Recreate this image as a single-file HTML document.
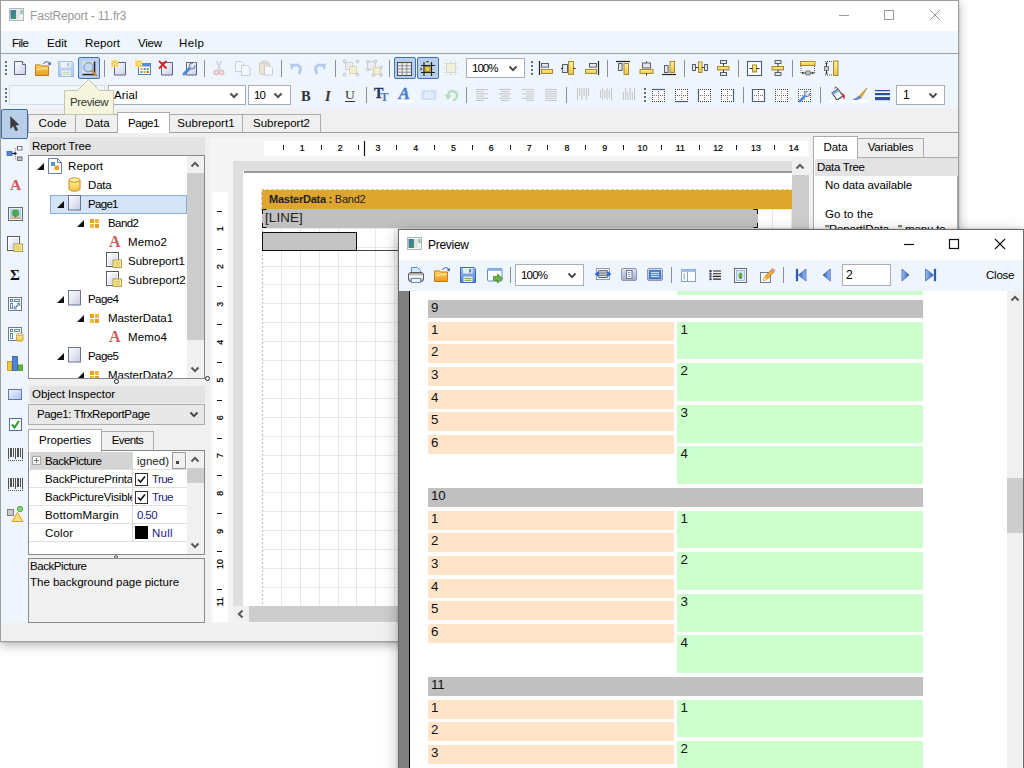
<!DOCTYPE html>
<html><head><meta charset="utf-8"><title>FastReport</title><style>
*{box-sizing:border-box;margin:0;padding:0}
html,body{width:1024px;height:768px;overflow:hidden;background:#fff}
body{font-family:"Liberation Sans",sans-serif;font-size:12px;color:#000;position:relative}
.a{position:absolute}
.t{position:absolute;white-space:nowrap;line-height:14px;font-size:12px;letter-spacing:-0.25px}
#main{position:absolute;left:0;top:0;width:959px;height:642px;background:#F0F0F0;border:1px solid #9E9E9E;box-shadow:0 3px 10px rgba(0,0,0,.30),0 0 2px rgba(0,0,0,.2);overflow:hidden}
#main>.in{position:absolute;left:-1px;top:-1px;width:959px;height:642px}
#prev{position:absolute;left:398px;top:229px;width:626px;height:560px;background:#fff;border:1px solid #6A6A6A;box-shadow:0 4px 15px rgba(0,0,0,.28),0 0 3px rgba(0,0,0,.2);overflow:hidden}
#prev>.in{position:absolute;left:-399px;top:-230px;width:1024px;height:768px}
.sep{position:absolute;width:1px;background:#8D8D8D}
.cb{position:absolute;background:#fff;border:1px solid #ABADB3;height:19px}
.tab{position:absolute;border:1px solid #ACACAC;background:#F0F0F0;text-align:center;font-size:12px;line-height:14px;letter-spacing:-0.25px}
svg{position:absolute;overflow:visible}
</style></head><body>
<svg width="0" height="0" style="position:absolute"><defs>
<linearGradient id="gpg" x1="0" y1="0" x2="1" y2="1"><stop offset="0" stop-color="#fff"/><stop offset="1" stop-color="#C9CEE6"/></linearGradient>
<linearGradient id="gy" x1="0" y1="0" x2="0" y2="1"><stop offset="0" stop-color="#FFF0A0"/><stop offset="1" stop-color="#EFC448"/></linearGradient>
<linearGradient id="gfold" x1="0" y1="0" x2="0" y2="1"><stop offset="0" stop-color="#FFD56A"/><stop offset="1" stop-color="#E59A1C"/></linearGradient>
<linearGradient id="gbl" x1="0" y1="0" x2="0" y2="1"><stop offset="0" stop-color="#9DC0F2"/><stop offset="1" stop-color="#4C7ED2"/></linearGradient>
<linearGradient id="gbl2" x1="0" y1="0" x2="1" y2="0"><stop offset="0" stop-color="#9CC0F2"/><stop offset="1" stop-color="#2C5DB8"/></linearGradient>
<linearGradient id="gbl3" x1="0" y1="0" x2="1" y2="0"><stop offset="0" stop-color="#2C5DB8"/><stop offset="1" stop-color="#9CC0F2"/></linearGradient>
<linearGradient id="gapp" x1="0" y1="0" x2="1" y2="1"><stop offset="0" stop-color="#3F6FB0"/><stop offset="1" stop-color="#3FA060"/></linearGradient>
<linearGradient id="gprn" x1="0" y1="0" x2="0" y2="1"><stop offset="0" stop-color="#8A8A8A"/><stop offset=".45" stop-color="#FAFAFA"/><stop offset="1" stop-color="#9A9A9A"/></linearGradient>
<linearGradient id="grc" x1="0" y1="0" x2="1" y2="1"><stop offset="0" stop-color="#F4F8FF"/><stop offset="1" stop-color="#A8C0EC"/></linearGradient>
<linearGradient id="gsl" x1="0" y1="0" x2="0" y2="1"><stop offset="0" stop-color="#DCE2F0"/><stop offset="1" stop-color="#9EAECE"/></linearGradient>
<linearGradient id="ggr" x1="0" y1="0" x2="0" y2="1"><stop offset="0" stop-color="#f4f4f4"/><stop offset="1" stop-color="#B5B5B5"/></linearGradient>
</defs></svg>
<div id="main"><div class="in">
<div class="a" style="left:1px;top:1px;width:957px;height:30px;background:#fff;"></div>
<svg style="left:9px;top:8px" width="15" height="13" viewBox="0 0 15 13"><rect x="0.5" y="0.5" width="14" height="12" fill="#F4F4F4" stroke="#AEB6BE"/><rect x="1.5" y="2" width="5.5" height="9" fill="url(#gapp)"/><rect x="7" y="2" width="4" height="9" fill="#E4E4E4"/><rect x="11.5" y="2" width="2" height="4" fill="#7CB8A0"/></svg>
<div class="t" style="left:30px;top:9px;font-size:12px;letter-spacing:-0.182px;color:#999;">FastReport - 11.fr3</div>
<svg style="left:839px;top:9px" width="110" height="14" viewBox="0 0 110 14"><path d="M0 6.5 H10" stroke="#999" stroke-width="1"/><rect x="45.5" y="1.5" width="9" height="9" fill="none" stroke="#999"/><path d="M91 1 L101 11 M101 1 L91 11" stroke="#999" stroke-width="1"/></svg>
<div class="a" style="left:1px;top:31px;width:957px;height:22px;background:#EEF5FD;"></div>
<div class="t" style="left:12px;top:36px;font-size:11.5px;letter-spacing:-0.516px;">File</div>
<div class="t" style="left:47px;top:36px;font-size:11.5px;letter-spacing:0.062px;">Edit</div>
<div class="t" style="left:85px;top:36px;font-size:11.5px;letter-spacing:0.1px;">Report</div>
<div class="t" style="left:138px;top:36px;font-size:11.5px;letter-spacing:-0.245px;">View</div>
<div class="t" style="left:179px;top:36px;font-size:11.5px;letter-spacing:0.448px;">Help</div>
<div class="a" style="left:1px;top:53px;width:957px;height:1px;background:#A0A0A0;"></div>
<div class="a" style="left:1px;top:54px;width:957px;height:55px;background:#EEF5FD;"></div>
<div class="a" style="left:5px;top:61px;width:2px;height:2px;background:#6E6E6E;"></div><div class="a" style="left:5px;top:65px;width:2px;height:2px;background:#6E6E6E;"></div><div class="a" style="left:5px;top:69px;width:2px;height:2px;background:#6E6E6E;"></div><div class="a" style="left:5px;top:73px;width:2px;height:2px;background:#6E6E6E;"></div>
<div class="a" style="left:5px;top:88px;width:2px;height:2px;background:#6E6E6E;"></div><div class="a" style="left:5px;top:92px;width:2px;height:2px;background:#6E6E6E;"></div><div class="a" style="left:5px;top:96px;width:2px;height:2px;background:#6E6E6E;"></div><div class="a" style="left:5px;top:100px;width:2px;height:2px;background:#6E6E6E;"></div>
<svg style="left:12px;top:60px" width="16" height="16" viewBox="0 0 16 16"><g opacity="1"><path d="M2.5 1.5 H10.5 L13.5 4.5 V14.5 H2.5 Z" fill="url(#gpg)" stroke="#5A6483" stroke-width="1"/><path d="M10.5 1.5 V4.5 H13.5" fill="#fff" stroke="#5A6483" stroke-width="1"/></g></svg>
<svg style="left:35px;top:60px" width="16" height="16" viewBox="0 0 16 16"><path d="M0.5 6 V4.9 H5.5 L6.5 6 H13.5 V15.5 H0.5 Z" fill="url(#gfold)" stroke="#C87A18"/><path d="M1.5 9.5 H5.5 L6.5 8.5 H12.5" fill="none" stroke="#FFE9A8" stroke-width="1"/><path d="M8.5 4 C9.5 1 13.5 1 14.6 3.3" fill="none" stroke="#34558F" stroke-width="1"/><path d="M16 2 L15.4 5.6 L12.6 4 Z" fill="#34558F"/></svg>
<svg style="left:58px;top:60px" width="16" height="16" viewBox="0 0 16 16"><g opacity="0.4"><path d="M0.5 1.5 H14 L15.5 3 V16.5 H0.5 Z" fill="url(#gbl)" stroke="#3A68BC"/><rect x="3" y="2" width="9.5" height="5.5" fill="#E9EEF8"/><rect x="9.3" y="3" width="1.8" height="3.5" fill="#3E6FC4"/><rect x="3.5" y="10.5" width="9" height="5.5" fill="#F2F7EC"/><path d="M4.5 12.3 H11.5 M4.5 14.4 H11.5" stroke="#7DB84E" stroke-width="1.3"/></g></svg>
<div class="a" style="left:78px;top:57px;width:22px;height:22px;background:#B9CFEB;border:1px solid #3F73B7;border-radius:2px"></div>
<svg style="left:81px;top:60px" width="16" height="16" viewBox="0 0 16 16"><path d="M1.5 1.5 H13.5 V14.5 H1.5" fill="#E4E4EC" stroke="none"/><path d="M13.5 1.5 V14.5 H1.5" fill="none" stroke="#222" stroke-width="1.6"/><circle cx="7.5" cy="7.2" r="4.6" fill="#BFD6EE" fill-opacity=".85" stroke="#7FA6D4" stroke-width="1.5"/><path d="M11 11 L15 15.3" stroke="#C88A4A" stroke-width="2.4" stroke-linecap="round"/></svg>
<div class="sep" style="left:104px;top:60px;width:1px;height:17px;"></div>
<svg style="left:111px;top:60px" width="16" height="16" viewBox="0 0 16 16"><path d="M3.5 2.5 H14.5 V15 H3.5 Z" fill="url(#gpg)" stroke="#5A6483"/><rect x="0.20000000000000018" y="0.20000000000000018" width="7" height="7" fill="#FFE98A"/><path d="M3.7 0.20000000000000018 V7.2 M0.20000000000000018 3.7 H7.2 M0.7000000000000002 0.7000000000000002 L6.7 6.7 M0.7000000000000002 6.7 L6.7 0.7000000000000002" stroke="#E8B820" stroke-width=".9"/><rect x="2.7" y="2.7" width="2" height="2" fill="#FFF6C0"/></svg>
<svg style="left:135px;top:60px" width="16" height="16" viewBox="0 0 16 16"><rect x="3.5" y="3.5" width="12" height="11" fill="#fff" stroke="#4F7EC2"/><rect x="3.5" y="3.5" width="12" height="3" fill="#5B8DD6"/><g><rect x="5.5" y="8" width="2" height="2" fill="#E8A020"/><rect x="8.7" y="8" width="2" height="2" fill="#4A90D9"/><rect x="11.8" y="8" width="2" height="2" fill="#58A840"/><rect x="5.5" y="11" width="2" height="2" fill="#4A90D9"/><rect x="8.7" y="11" width="2" height="2" fill="#E8A020"/><rect x="11.8" y="11" width="2" height="2" fill="#D85040"/></g><rect x="0.20000000000000018" y="0.20000000000000018" width="7" height="7" fill="#FFE98A"/><path d="M3.7 0.20000000000000018 V7.2 M0.20000000000000018 3.7 H7.2 M0.7000000000000002 0.7000000000000002 L6.7 6.7 M0.7000000000000002 6.7 L6.7 0.7000000000000002" stroke="#E8B820" stroke-width=".9"/><rect x="2.7" y="2.7" width="2" height="2" fill="#FFF6C0"/></svg>
<svg style="left:158px;top:60px" width="16" height="16" viewBox="0 0 16 16"><path d="M3.5 2.5 H14.5 V15 H3.5 Z" fill="url(#gpg)" stroke="#5A6483"/><path d="M1 1 L8.5 8.5 M8.5 1 L1 8.5" stroke="#E02020" stroke-width="1.8"/></svg>
<svg style="left:182px;top:60px" width="16" height="16" viewBox="0 0 16 16"><path d="M4.5 2.5 H14.5 V15 H4.5 Z" fill="url(#gpg)" stroke="#5A6483"/><path d="M2 14 L8 8" stroke="#4F86D6" stroke-width="3" stroke-linecap="round"/><circle cx="10" cy="6" r="3" fill="#C9D3E4" stroke="#6B7FA6"/><path d="M10 6 L13 3" stroke="#EEF5FD" stroke-width="2"/></svg>
<div class="sep" style="left:204px;top:60px;width:1px;height:17px;"></div>
<svg style="left:211px;top:60px" width="16" height="16" viewBox="0 0 16 16"><g opacity=".38"><path d="M5.5 1 L9.3 10 M10.5 1 L6.7 10" stroke="#8AA0C0" stroke-width="1.4"/><circle cx="5.3" cy="12.5" r="2" fill="none" stroke="#E05050" stroke-width="1.5"/><circle cx="10.7" cy="12.5" r="2" fill="none" stroke="#E05050" stroke-width="1.5"/></g></svg>
<svg style="left:234px;top:60px" width="16" height="16" viewBox="0 0 16 16"><g opacity=".33"><path d="M1.5 1.5 H7.5 L9.5 3.5 V11.5 H1.5 Z" fill="#fff" stroke="#7A86A8"/><path d="M7.5 5.5 H13.5 L16 8 V15.5 H7.5 Z" fill="#fff" stroke="#7A86A8"/></g></svg>
<svg style="left:258px;top:60px" width="16" height="16" viewBox="0 0 16 16"><g opacity=".4"><rect x="1.5" y="2.5" width="10" height="12" rx="1" fill="#E7C98D" stroke="#B89455"/><rect x="4" y="1" width="5" height="3" fill="#BBB" stroke="#888" stroke-width=".6"/><path d="M6.5 6 H12.5 L14.5 8 V15 H6.5 Z" fill="#fff" stroke="#8A93AE"/></g></svg>
<div class="sep" style="left:281px;top:60px;width:1px;height:17px;"></div>
<svg style="left:288px;top:60px" width="16" height="16" viewBox="0 0 16 16"><g opacity=".5"><path d="M4.5 6.5 C9 3 15 6 11 14" fill="none" stroke="#7FA5E2" stroke-width="2.8"/><path d="M1.5 3.5 L7.5 4 L3.5 10 Z" fill="#7FA5E2"/></g></svg>
<svg style="left:312px;top:60px" width="16" height="16" viewBox="0 0 16 16"><g opacity=".5" transform="translate(16 0) scale(-1 1)"><path d="M4.5 6.5 C9 3 15 6 11 14" fill="none" stroke="#7FA5E2" stroke-width="2.8"/><path d="M1.5 3.5 L7.5 4 L3.5 10 Z" fill="#7FA5E2"/></g></svg>
<div class="sep" style="left:335px;top:60px;width:1px;height:17px;"></div>
<svg style="left:343px;top:60px" width="16" height="16" viewBox="0 0 16 16"><g opacity=".5"><rect x="2.5" y="2.5" width="7" height="7" fill="#E8E8EC" stroke="#AAA"/><rect x="6.5" y="6.5" width="7" height="7" fill="#F5EBA8" stroke="#CDBB60"/><circle cx="1.5" cy="1.5" r="1.3" fill="#fff" stroke="#777" stroke-width=".9"/><circle cx="14.5" cy="1.5" r="1.3" fill="#fff" stroke="#777" stroke-width=".9"/><circle cx="1.5" cy="14.5" r="1.3" fill="#fff" stroke="#777" stroke-width=".9"/><circle cx="14.5" cy="14.5" r="1.3" fill="#fff" stroke="#777" stroke-width=".9"/></g></svg>
<svg style="left:366px;top:60px" width="16" height="16" viewBox="0 0 16 16"><g opacity=".5"><rect x="1.5" y="1.5" width="8" height="8" fill="#E8E8EC" stroke="#AAA"/><rect x="7.5" y="7.5" width="7" height="7" fill="#F5EBA8" stroke="#CDBB60"/><circle cx="1.5" cy="1.5" r="1.3" fill="#fff" stroke="#777" stroke-width=".9"/><circle cx="9.5" cy="1.5" r="1.3" fill="#fff" stroke="#777" stroke-width=".9"/><circle cx="1.5" cy="9.5" r="1.3" fill="#fff" stroke="#777" stroke-width=".9"/><circle cx="15" cy="7.5" r="1.3" fill="#fff" stroke="#777" stroke-width=".9"/><circle cx="7.5" cy="15" r="1.3" fill="#fff" stroke="#777" stroke-width=".9"/><circle cx="15" cy="15" r="1.3" fill="#fff" stroke="#777" stroke-width=".9"/></g></svg>
<div class="sep" style="left:389px;top:60px;width:1px;height:17px;"></div>
<div class="a" style="left:394px;top:57px;width:22px;height:22px;background:#B9CFEB;border:1px solid #3F73B7;border-radius:2px"></div>
<svg style="left:397px;top:60px" width="16" height="16" viewBox="0 0 16 16"><rect x="0.5" y="2.5" width="14" height="13" fill="#F2F2F2" stroke="#4A4A4A" stroke-width="1.1"/><path d="M0.5 5.8 H14.5 M0.5 9 H14.5 M0.5 12.2 H14.5 M5.2 2.5 V15.5 M9.8 2.5 V15.5" stroke="#8A8A8A" stroke-width="1"/></svg>
<div class="a" style="left:417px;top:57px;width:22px;height:22px;background:#B9CFEB;border:1px solid #3F73B7;border-radius:2px"></div>
<svg style="left:420px;top:60px" width="16" height="16" viewBox="0 0 16 16"><path d="M4 2 V16 M11.5 2 V16 M1 5.5 H15 M1 12.5 H15" stroke="#222" stroke-width="1.2"/><rect x="5" y="6.5" width="5" height="5" fill="#F0C840" stroke="#9A7A1A" stroke-width=".9"/><path d="M6 1 L7.5 2.8 L9 1 Z M0.5 7.5 L2.3 9 L0.5 10.5 Z" fill="#333"/></svg>
<svg style="left:443px;top:60px" width="16" height="16" viewBox="0 0 16 16"><g opacity=".55"><rect x="3.5" y="3.5" width="9" height="9" fill="#F3EDB8" stroke="#C9C9A0"/><path d="M3.5 0 V16 M12.5 0 V16 M0 3.5 H16 M0 12.5 H16" stroke="#BBB" stroke-width="1" stroke-dasharray="1 1"/><path d="M7 1 L8 2.5 L9 1 Z M1 7 L2.5 8 L1 9 Z M15 7 L13.5 8 L15 9 Z M7 15 L8 13.5 L9 15 Z" fill="#AAA"/></g></svg>
<div class="cb" style="left:466px;top:58px;width:59px;height:20px;"></div>
<div class="t" style="left:472px;top:61px;font-size:11.5px;letter-spacing:-0.964px;">100%</div>
<svg style="left:508.5px;top:65.5px" width="8" height="5" viewBox="0 0 8 5"><path d="M0.5 0.5 L4.0 4.2 L7.5 0.5" fill="none" stroke="#484848" stroke-width="1.9"/></svg>
<div class="a" style="left:531px;top:61px;width:2px;height:2px;background:#6E6E6E;"></div><div class="a" style="left:531px;top:65px;width:2px;height:2px;background:#6E6E6E;"></div><div class="a" style="left:531px;top:69px;width:2px;height:2px;background:#6E6E6E;"></div><div class="a" style="left:531px;top:73px;width:2px;height:2px;background:#6E6E6E;"></div>
<svg style="left:538px;top:60px" width="16" height="16" viewBox="0 0 16 16"><path d="M1.5 1 V15" stroke="#222" stroke-width="1.2"/><rect x="3.5" y="3.5" width="7" height="3.6" fill="#E6E6E6" stroke="#5A6070" stroke-width="1"/><rect x="3.5" y="9.5" width="11" height="4" fill="url(#gy)" stroke="#A88A2A" stroke-width="1"/></svg>
<svg style="left:561px;top:60px" width="16" height="16" viewBox="0 0 16 16"><rect x="1.5" y="4.5" width="5" height="8" fill="#E6E6E6" stroke="#5A6070" stroke-width="1"/><rect x="7.5" y="1.5" width="5" height="13" fill="url(#gy)" stroke="#A88A2A" stroke-width="1"/><path d="M0 8.5 H2 M12.5 8.5 H14.5" stroke="#222"/></svg>
<svg style="left:584px;top:60px" width="16" height="16" viewBox="0 0 16 16"><path d="M14.5 1 V15" stroke="#222" stroke-width="1.2"/><rect x="5.5" y="3.5" width="7" height="3.6" fill="#E6E6E6" stroke="#5A6070" stroke-width="1"/><rect x="1.5" y="9.5" width="11" height="4" fill="url(#gy)" stroke="#A88A2A" stroke-width="1"/></svg>
<div class="sep" style="left:607px;top:60px;width:1px;height:17px;"></div>
<svg style="left:615px;top:60px" width="16" height="16" viewBox="0 0 16 16"><path d="M1 1.5 H15" stroke="#222" stroke-width="1.2"/><rect x="3.5" y="3.5" width="3.6" height="7" fill="#E6E6E6" stroke="#5A6070" stroke-width="1"/><rect x="9" y="3.5" width="4.5" height="11" fill="url(#gy)" stroke="#A88A2A" stroke-width="1"/></svg>
<svg style="left:638px;top:60px" width="16" height="16" viewBox="0 0 16 16"><rect x="4.5" y="3" width="8" height="5" fill="#E6E6E6" stroke="#5A6070" stroke-width="1"/><rect x="2" y="9.5" width="13" height="4" fill="url(#gy)" stroke="#A88A2A" stroke-width="1"/><path d="M8.5 13.5 V15.5 M8.5 1.5 V3" stroke="#222"/></svg>
<svg style="left:661px;top:60px" width="16" height="16" viewBox="0 0 16 16"><path d="M1 14.5 H15" stroke="#222" stroke-width="1.2"/><rect x="3.5" y="5.5" width="3.6" height="7" fill="#E6E6E6" stroke="#5A6070" stroke-width="1"/><rect x="9" y="1.5" width="4.5" height="11" fill="url(#gy)" stroke="#A88A2A" stroke-width="1"/></svg>
<div class="sep" style="left:684px;top:60px;width:1px;height:17px;"></div>
<svg style="left:692px;top:60px" width="16" height="16" viewBox="0 0 16 16"><rect x="0.5" y="4.5" width="3" height="6" fill="#E6E6E6" stroke="#5A6070" stroke-width="1"/><rect x="12.5" y="4.5" width="3" height="6" fill="#E6E6E6" stroke="#5A6070" stroke-width="1"/><rect x="6.5" y="2" width="3.5" height="10.5" fill="url(#gy)" stroke="#A88A2A" stroke-width="1"/><path d="M3.5 7.5 H6.5 M10 7.5 H12.5" stroke="#444"/></svg>
<svg style="left:716px;top:60px" width="16" height="16" viewBox="0 0 16 16"><rect x="4.5" y="0.5" width="6" height="3" fill="#E6E6E6" stroke="#5A6070" stroke-width="1"/><rect x="4.5" y="12.5" width="6" height="3" fill="#E6E6E6" stroke="#5A6070" stroke-width="1"/><rect x="1.5" y="6.5" width="11.5" height="3.5" fill="url(#gy)" stroke="#A88A2A" stroke-width="1"/><path d="M7.5 3.5 V6.5 M7.5 10 V12.5" stroke="#444"/></svg>
<div class="sep" style="left:738px;top:60px;width:1px;height:17px;"></div>
<svg style="left:747px;top:60px" width="16" height="16" viewBox="0 0 16 16"><rect x="0.5" y="1.5" width="14" height="14" fill="#fff" stroke="#4A5F80" stroke-width="1.1"/><rect x="5.5" y="5" width="4" height="7" fill="url(#gy)" stroke="#A88A2A" stroke-width="1"/><path d="M2.5 8.5 H5.5 M9.5 8.5 H12.5" stroke="#222"/></svg>
<svg style="left:770px;top:60px" width="16" height="16" viewBox="0 0 16 16"><rect x="5" y="0.5" width="6" height="3" fill="#E6E6E6" stroke="#5A6070" stroke-width="1"/><rect x="5" y="12.5" width="6" height="3" fill="#E6E6E6" stroke="#5A6070" stroke-width="1"/><rect x="2" y="6.5" width="11.5" height="3.5" fill="url(#gy)" stroke="#A88A2A" stroke-width="1"/><path d="M8 3.5 V6.5 M8 10 V12.5" stroke="#444"/></svg>
<div class="sep" style="left:792px;top:60px;width:1px;height:17px;"></div>
<svg style="left:800px;top:60px" width="16" height="16" viewBox="0 0 16 16"><rect x="0.5" y="1.5" width="14.5" height="4" fill="url(#gy)" stroke="#A88A2A" stroke-width="1"/><path d="M1 6 V14 M14.5 6 V14" stroke="#555" stroke-dasharray="1 1"/><rect x="6" y="11" width="4" height="4" fill="#C8C8C8" stroke="#666" stroke-width=".8"/><path d="M2 13 H6 M10 13 H13.5" stroke="#333"/><path d="M1.5 13 l1.8 -1.5 v3 Z M14 13 l-1.8 -1.5 v3 Z" fill="#333"/></svg>
<svg style="left:823px;top:60px" width="16" height="16" viewBox="0 0 16 16"><rect x="10.5" y="1" width="4.5" height="14.5" fill="url(#gy)" stroke="#A88A2A" stroke-width="1"/><path d="M2 1.5 H10 M2 15 H10" stroke="#555" stroke-dasharray="1 1"/><rect x="1.5" y="6.5" width="4" height="4" fill="#C8C8C8" stroke="#666" stroke-width=".8"/><path d="M3.5 2.5 V6.5 M3.5 10.5 V14" stroke="#333"/><path d="M3.5 2 l-1.5 1.8 h3 Z M3.5 14.5 l-1.5 -1.8 h3 Z" fill="#333"/></svg>
<div class="cb" style="left:9px;top:85px;width:96px;height:20px;background:#F2F7FD;border-color:#D6DBE3"></div>
<div class="cb" style="left:108px;top:85px;width:138px;height:20px;"></div>
<div class="t" style="left:114px;top:88px;font-size:11.5px;letter-spacing:0.121px;">Arial</div>
<svg style="left:230px;top:93px" width="8" height="5" viewBox="0 0 8 5"><path d="M0.5 0.5 L4.0 4.2 L7.5 0.5" fill="none" stroke="#484848" stroke-width="1.9"/></svg>
<div class="cb" style="left:248px;top:85px;width:43px;height:20px;"></div>
<div class="t" style="left:254px;top:88px;font-size:11.5px;letter-spacing:-0.781px;">10</div>
<svg style="left:274px;top:93px" width="8" height="5" viewBox="0 0 8 5"><path d="M0.5 0.5 L4.0 4.2 L7.5 0.5" fill="none" stroke="#484848" stroke-width="1.9"/></svg>
<svg style="left:300px;top:87px" width="16" height="16" viewBox="0 0 16 16"><text x="1" y="13.5" font-family="Liberation Serif,serif" font-weight="bold" font-size="14.5" fill="#333">B</text></svg>
<svg style="left:322px;top:87px" width="16" height="16" viewBox="0 0 16 16"><text x="3" y="13.5" font-family="Liberation Serif,serif" font-weight="bold" font-style="italic" font-size="14.5" fill="#333">I</text></svg>
<svg style="left:343px;top:87px" width="16" height="16" viewBox="0 0 16 16"><text x="2" y="12" font-family="Liberation Serif,serif" font-size="13.5" fill="#333">U</text><path d="M2 14.5 H12" stroke="#333" stroke-width="1"/></svg>
<div class="sep" style="left:366px;top:87px;width:1px;height:16px;"></div>
<svg style="left:374px;top:87px" width="16" height="16" viewBox="0 0 16 16"><text x="0" y="11" font-family="Liberation Serif,serif" font-weight="bold" font-size="14" fill="#1F3560" stroke="#1F3560" stroke-width=".3">T</text><text x="6.5" y="14" font-family="Liberation Serif,serif" font-weight="bold" font-size="12" fill="#5577AA">T</text></svg>
<svg style="left:398px;top:87px" width="16" height="16" viewBox="0 0 16 16"><text x="0.5" y="12" font-family="Liberation Serif,serif" font-weight="bold" font-style="italic" font-size="17" fill="#4C7FD0" stroke="#4C7FD0" stroke-width=".4">A</text><rect x="0" y="13" width="15" height="3" fill="#fff"/></svg>
<svg style="left:421px;top:87px" width="16" height="16" viewBox="0 0 16 16"><g opacity=".55"><rect x="0.5" y="3" width="15" height="10" fill="#BCCFF0"/><text x="2.5" y="11.2" font-size="9" font-family="Liberation Sans,sans-serif" fill="#fff">ab</text></g></svg>
<svg style="left:444px;top:87px" width="16" height="16" viewBox="0 0 16 16"><g opacity=".35"><path d="M4 9 A4.5 4.5 0 1 1 9 13" fill="none" stroke="#4CAF50" stroke-width="2.4"/><path d="M0.5 8 L7.5 8 L4 13 Z" fill="#4CAF50"/></g></svg>
<div class="sep" style="left:466px;top:87px;width:1px;height:16px;"></div>
<svg style="left:475px;top:87px" width="16" height="16" viewBox="0 0 16 16"><path d="M1 2.5 H13" stroke="#C4C4C4" stroke-width="1"/><path d="M1 4.7 H9" stroke="#C4C4C4" stroke-width="1"/><path d="M1 6.9 H13" stroke="#C4C4C4" stroke-width="1"/><path d="M1 9.100000000000001 H9" stroke="#C4C4C4" stroke-width="1"/><path d="M1 11.3 H13" stroke="#C4C4C4" stroke-width="1"/><path d="M1 13.5 H9" stroke="#C4C4C4" stroke-width="1"/></svg>
<svg style="left:498px;top:87px" width="16" height="16" viewBox="0 0 16 16"><path d="M1 2.5 H13" stroke="#C4C4C4" stroke-width="1"/><path d="M3 4.7 H11" stroke="#C4C4C4" stroke-width="1"/><path d="M1 6.9 H13" stroke="#C4C4C4" stroke-width="1"/><path d="M3 9.100000000000001 H11" stroke="#C4C4C4" stroke-width="1"/><path d="M1 11.3 H13" stroke="#C4C4C4" stroke-width="1"/><path d="M3 13.5 H11" stroke="#C4C4C4" stroke-width="1"/></svg>
<svg style="left:521px;top:87px" width="16" height="16" viewBox="0 0 16 16"><path d="M1 2.5 H13" stroke="#C4C4C4" stroke-width="1"/><path d="M5 4.7 H13" stroke="#C4C4C4" stroke-width="1"/><path d="M1 6.9 H13" stroke="#C4C4C4" stroke-width="1"/><path d="M5 9.100000000000001 H13" stroke="#C4C4C4" stroke-width="1"/><path d="M1 11.3 H13" stroke="#C4C4C4" stroke-width="1"/><path d="M5 13.5 H13" stroke="#C4C4C4" stroke-width="1"/></svg>
<svg style="left:544px;top:87px" width="16" height="16" viewBox="0 0 16 16"><path d="M1 2.5 H13" stroke="#C4C4C4" stroke-width="1"/><path d="M1 4.7 H13" stroke="#C4C4C4" stroke-width="1"/><path d="M1 6.9 H13" stroke="#C4C4C4" stroke-width="1"/><path d="M1 9.100000000000001 H13" stroke="#C4C4C4" stroke-width="1"/><path d="M1 11.3 H13" stroke="#C4C4C4" stroke-width="1"/><path d="M1 13.5 H13" stroke="#C4C4C4" stroke-width="1"/></svg>
<div class="sep" style="left:566px;top:87px;width:1px;height:16px;"></div>
<svg style="left:575px;top:87px" width="16" height="16" viewBox="0 0 16 16"><path d="M2.5 1 V13" stroke="#C4C4C4" stroke-width="1"/><path d="M4.7 1 V9" stroke="#C4C4C4" stroke-width="1"/><path d="M6.9 1 V13" stroke="#C4C4C4" stroke-width="1"/><path d="M9.100000000000001 1 V9" stroke="#C4C4C4" stroke-width="1"/><path d="M11.3 1 V13" stroke="#C4C4C4" stroke-width="1"/><path d="M13.5 1 V9" stroke="#C4C4C4" stroke-width="1"/></svg>
<svg style="left:598px;top:87px" width="16" height="16" viewBox="0 0 16 16"><path d="M2.5 3 V11" stroke="#C4C4C4" stroke-width="1"/><path d="M4.7 1 V13" stroke="#C4C4C4" stroke-width="1"/><path d="M6.9 3 V11" stroke="#C4C4C4" stroke-width="1"/><path d="M9.100000000000001 1 V13" stroke="#C4C4C4" stroke-width="1"/><path d="M11.3 3 V11" stroke="#C4C4C4" stroke-width="1"/><path d="M13.5 1 V13" stroke="#C4C4C4" stroke-width="1"/></svg>
<svg style="left:621px;top:87px" width="16" height="16" viewBox="0 0 16 16"><path d="M2.5 5 V13" stroke="#C4C4C4" stroke-width="1"/><path d="M4.7 1 V13" stroke="#C4C4C4" stroke-width="1"/><path d="M6.9 5 V13" stroke="#C4C4C4" stroke-width="1"/><path d="M9.100000000000001 1 V13" stroke="#C4C4C4" stroke-width="1"/><path d="M11.3 5 V13" stroke="#C4C4C4" stroke-width="1"/><path d="M13.5 1 V13" stroke="#C4C4C4" stroke-width="1"/></svg>
<div class="a" style="left:644px;top:88px;width:2px;height:2px;background:#6E6E6E;"></div><div class="a" style="left:644px;top:92px;width:2px;height:2px;background:#6E6E6E;"></div><div class="a" style="left:644px;top:96px;width:2px;height:2px;background:#6E6E6E;"></div><div class="a" style="left:644px;top:100px;width:2px;height:2px;background:#6E6E6E;"></div>
<svg style="left:651px;top:87px" width="16" height="16" viewBox="0 0 16 16"><rect x="1" y="2" width="13" height="13" fill="#fff"/><path d="M1 2.5 H14 M1 14.5 H14 M1.5 2 V15 M13.5 2 V15" fill="none" stroke="#444" stroke-dasharray="1 1"/><path d="M7.5 4 V13 M3 8.5 H12" stroke="#777" stroke-dasharray="1 1"/><path d="M1 2.5 H14" fill="none" stroke="#4A5F80" stroke-width="1.2"/></svg>
<svg style="left:674px;top:87px" width="16" height="16" viewBox="0 0 16 16"><rect x="1" y="2" width="13" height="13" fill="#fff"/><path d="M1 2.5 H14 M1 14.5 H14 M1.5 2 V15 M13.5 2 V15" fill="none" stroke="#444" stroke-dasharray="1 1"/><path d="M7.5 4 V13 M3 8.5 H12" stroke="#777" stroke-dasharray="1 1"/><path d="M1 14.5 H14" fill="none" stroke="#4A5F80" stroke-width="1.2"/></svg>
<svg style="left:697px;top:87px" width="16" height="16" viewBox="0 0 16 16"><rect x="1" y="2" width="13" height="13" fill="#fff"/><path d="M1 2.5 H14 M1 14.5 H14 M1.5 2 V15 M13.5 2 V15" fill="none" stroke="#444" stroke-dasharray="1 1"/><path d="M7.5 4 V13 M3 8.5 H12" stroke="#777" stroke-dasharray="1 1"/><path d="M1.5 2 V15" fill="none" stroke="#4A5F80" stroke-width="1.2"/></svg>
<svg style="left:720px;top:87px" width="16" height="16" viewBox="0 0 16 16"><rect x="1" y="2" width="13" height="13" fill="#fff"/><path d="M1 2.5 H14 M1 14.5 H14 M1.5 2 V15 M13.5 2 V15" fill="none" stroke="#444" stroke-dasharray="1 1"/><path d="M7.5 4 V13 M3 8.5 H12" stroke="#777" stroke-dasharray="1 1"/><path d="M13.5 2 V15" fill="none" stroke="#4A5F80" stroke-width="1.2"/></svg>
<div class="sep" style="left:743px;top:87px;width:1px;height:16px;"></div>
<svg style="left:751px;top:87px" width="16" height="16" viewBox="0 0 16 16"><rect x="1" y="2" width="13" height="13" fill="#fff"/><path d="M1 2.5 H14 M1 14.5 H14 M1.5 2 V15 M13.5 2 V15" fill="none" stroke="#444" stroke-dasharray="1 1"/><path d="M7.5 4 V13 M3 8.5 H12" stroke="#777" stroke-dasharray="1 1"/><path d="M1.5 2.5 H13.5 V14.5 H1.5 Z" fill="none" stroke="#4A5F80" stroke-width="1.2"/></svg>
<svg style="left:774px;top:87px" width="16" height="16" viewBox="0 0 16 16"><rect x="1" y="2" width="13" height="13" fill="#fff"/><path d="M1 2.5 H14 M1 14.5 H14 M1.5 2 V15 M13.5 2 V15" fill="none" stroke="#444" stroke-dasharray="1 1"/><path d="M7.5 4 V13 M3 8.5 H12" stroke="#777" stroke-dasharray="1 1"/></svg>
<svg style="left:797px;top:87px" width="16" height="16" viewBox="0 0 16 16"><rect x="1" y="2" width="13" height="13" fill="#fff"/><path d="M1 2.5 H14 M1 14.5 H14 M1.5 2 V15 M13.5 2 V15" fill="none" stroke="#444" stroke-dasharray="1 1"/><path d="M7.5 4 V13 M3 8.5 H12" stroke="#777" stroke-dasharray="1 1"/><path d="M3 14 L8 9" stroke="#4F86D6" stroke-width="2.6" stroke-linecap="round"/><circle cx="10" cy="7" r="2.6" fill="#C9D3E4" stroke="#6B7FA6"/><path d="M10 7 L12.5 4.5" stroke="#EEF5FD" stroke-width="1.8"/></svg>
<div class="sep" style="left:820px;top:87px;width:1px;height:16px;"></div>
<svg style="left:829px;top:87px" width="16" height="16" viewBox="0 0 16 16"><path d="M3 6 L9 2 L14 9 L8 13 Z" fill="#F4F7FC" stroke="#444" stroke-width="1.1"/><path d="M6 1.5 C5 -0.5 9 -0.5 8.5 3" fill="none" stroke="#444"/><path d="M3 6 L9 2 L10.5 4 L4.5 8 Z" fill="#7FA8E0"/><path d="M13 6 C16.5 7 16.5 10.5 15 12.5 C14 10.5 13.5 9 13 6 Z" fill="#E03030"/><rect x="0" y="13" width="16" height="3" fill="#fff"/></svg>
<svg style="left:852px;top:87px" width="16" height="16" viewBox="0 0 16 16"><path d="M15 1 L7 9 L9 11 Z" fill="#E8B040" stroke="#B88420" stroke-width=".7"/><path d="M7 9 L9 11 L4 13 L1 12.5 C3.5 12 5 10.5 7 9 Z" fill="#6B93D6" stroke="#3E66B0" stroke-width=".6"/><rect x="0" y="13" width="16" height="3" fill="#fff"/></svg>
<svg style="left:875px;top:87px" width="16" height="16" viewBox="0 0 16 16"><rect x="0" y="3" width="15" height="1.2" fill="#2F4F9F"/><rect x="0" y="6" width="15" height="2.2" fill="#2F4F9F"/><rect x="0" y="10" width="15" height="3.2" fill="#2F4F9F"/></svg>
<div class="cb" style="left:896px;top:85px;width:49px;height:20px;"></div>
<div class="t" style="left:903px;top:88px;">1</div>
<svg style="left:929px;top:93px" width="8" height="5" viewBox="0 0 8 5"><path d="M0.5 0.5 L4.0 4.2 L7.5 0.5" fill="none" stroke="#484848" stroke-width="1.9"/></svg>
<div class="a" style="left:1px;top:109px;width:957px;height:24px;background:#F0F0F0;"></div>
<div class="a" style="left:28px;top:132px;width:930px;height:1px;background:#A0A0A0;"></div>
<div class="tab" style="left:28px;top:114px;width:49px;height:19px;font-size:11.5px;letter-spacing:0.089px;padding-top:1px;border-bottom-color:#A0A0A0">Code</div>
<div class="tab" style="left:75px;top:114px;width:45px;height:19px;font-size:11.5px;letter-spacing:-0.01px;padding-top:1px;border-bottom-color:#A0A0A0">Data</div>
<div class="tab" style="left:117px;top:112px;width:53px;height:21px;font-size:11.5px;letter-spacing:-0.434px;background:#fff;border-bottom:none;padding-top:3px;z-index:2">Page1</div>
<div class="tab" style="left:168px;top:114px;width:76px;height:19px;font-size:11.5px;letter-spacing:0.043px;padding-top:1px;border-bottom-color:#A0A0A0">Subreport1</div>
<div class="tab" style="left:242px;top:114px;width:79px;height:19px;font-size:11.5px;letter-spacing:0.016px;padding-top:1px;border-bottom-color:#A0A0A0">Subreport2</div>
<div class="a" style="left:1px;top:109px;width:27px;height:514px;background:#EEF5FD;"></div>
<div class="a" style="left:1px;top:109px;width:27px;height:30px;background:#B9CFE9;border:1px solid #3A6EA8;border-radius:2px"></div>
<svg style="left:0px;top:0px" width="30" height="140" viewBox="0 0 30 140"><path d="M10.5 116.5 L10.5 128.5 L13.3 126 L15.8 131 L17.8 130 L15.4 125.2 L19 124.8 Z" fill="#3A3A3A" stroke="#3A3A3A" stroke-width=".4"/></svg>
<svg style="left:6px;top:146px" width="17" height="16" viewBox="0 0 17 16"><rect x="1" y="5.5" width="5" height="4" fill="#4F86D6" stroke="#2E5AAC" stroke-width=".7"/><path d="M6 7.5 H10" stroke="#222" stroke-width="1.2"/><path d="M8.5 5.5 L11 7.5 L8.5 9.5 Z" fill="#222"/><rect x="11.5" y="0.5" width="4.5" height="3.5" fill="#fff" stroke="#555" stroke-width=".8"/><rect x="11.5" y="11" width="4.5" height="3.5" fill="#C8C8C8" stroke="#555" stroke-width=".8"/><path d="M11.5 2.2 H9.5 V12.8 H11.5" fill="none" stroke="#555" stroke-width=".7" stroke-dasharray="1 1"/></svg>
<svg style="left:10px;top:177px" width="12" height="14" viewBox="0 0 12 14"><text x="0" y="13" font-family="Liberation Serif,serif" font-weight="bold" font-size="15.5" fill="#CC5C5C">A</text></svg>
<svg style="left:8px;top:207px" width="16" height="16" viewBox="0 0 16 16"><rect x="0.5" y="0.5" width="14" height="13" fill="#EFEFEF" stroke="#6A6A6A"/><rect x="2" y="2" width="11" height="10" fill="#A8D0F0"/><circle cx="7.5" cy="6" r="3.6" fill="#4CA64C"/><rect x="6.5" y="8" width="2" height="3.5" fill="#A0703C"/><rect x="2" y="10.5" width="11" height="1.5" fill="#D6B06A"/></svg>
<svg style="left:7px;top:236px" width="17" height="17" viewBox="0 0 17 17"><rect x="0.5" y="0.5" width="12" height="14" fill="#fff" stroke="#5A5A5A"/><rect x="2" y="2" width="9" height="11" fill="url(#gpg)"/><rect x="7" y="8" width="8.5" height="7.5" fill="#FFF0A0" stroke="#A8963A" stroke-width=".9"/><path d="M8.5 10.3 H14 M8.5 12 H14 M8.5 13.7 H14" stroke="#C8AE40" stroke-width=".7"/></svg>
<svg style="left:10px;top:266px" width="12" height="15" viewBox="0 0 12 15"><text x="0" y="13.5" font-family="Liberation Serif,serif" font-weight="bold" font-size="15" fill="#111">Σ</text></svg>
<svg style="left:8px;top:297px" width="15" height="15" viewBox="0 0 15 15"><rect x="0.5" y="0.5" width="13" height="13" fill="#fff" stroke="#777"/><rect x="2.5" y="2.5" width="2" height="2" fill="#fff" stroke="#4A7EC0" stroke-width=".9"/><rect x="6.5" y="2.5" width="5" height="2" fill="#fff" stroke="#4A7EC0" stroke-width=".9"/><rect x="2.5" y="6.5" width="2" height="5" fill="#fff" stroke="#4A7EC0" stroke-width=".9"/><path d="M7.5 10.5 L10.5 7.5" stroke="#3E6FA8" stroke-width="1.1"/><path d="M6.3 9.3 V11.7 H8.7 M9.3 6.3 H11.7 V8.7" stroke="#3E6FA8" fill="none" stroke-width="1"/></svg>
<svg style="left:8px;top:327px" width="16" height="17" viewBox="0 0 16 17"><rect x="0.5" y="0.5" width="13" height="13" fill="#fff" stroke="#6A7A9A"/><rect x="2.5" y="2.5" width="2" height="2" fill="#fff" stroke="#4A7EC0" stroke-width=".9"/><rect x="6.5" y="2.5" width="5" height="2" fill="#fff" stroke="#4A7EC0" stroke-width=".9"/><rect x="2.5" y="6.5" width="2" height="5" fill="#fff" stroke="#4A7EC0" stroke-width=".9"/><path d="M8.5 7.5 V13 A3.2 1.2 0 0 0 15 13 V7.5 Z" fill="url(#gy)" stroke="#C0901A" stroke-width=".7"/><ellipse cx="11.75" cy="7.5" rx="3.2" ry="1.2" fill="#FFF0A8" stroke="#C0901A" stroke-width=".7"/></svg>
<svg style="left:7px;top:356px" width="17" height="16" viewBox="0 0 17 16"><rect x="0.5" y="5.5" width="4.5" height="9" fill="#F4C440" stroke="#C0901A" stroke-width=".8"/><rect x="5.5" y="0.5" width="5" height="14" fill="#4F86D6" stroke="#2E5AAC" stroke-width=".8"/><rect x="11.5" y="9" width="4" height="5.5" fill="#6DB33F" stroke="#3F8A1C" stroke-width=".8"/></svg>
<svg style="left:8px;top:389px" width="15" height="12" viewBox="0 0 15 12"><rect x="0.5" y="0.5" width="13" height="10" fill="url(#grc)" stroke="#5E78B0"/></svg>
<svg style="left:9px;top:418px" width="14" height="14" viewBox="0 0 14 14"><rect x="0.5" y="0.5" width="12" height="12" fill="#fff" stroke="#4F6FA8"/><path d="M3 6.5 L5.5 9.5 L10 3" fill="none" stroke="#2E9E2E" stroke-width="2"/></svg>
<svg style="left:8px;top:448px" width="16" height="14" viewBox="0 0 16 14"><rect x="0" y="0" width="1" height="11" fill="#505050"/><rect x="2" y="0" width="2" height="9" fill="#505050"/><rect x="5" y="0" width="1" height="9" fill="#505050"/><rect x="7" y="0" width="1" height="11" fill="#505050"/><rect x="9" y="0" width="2" height="9" fill="#505050"/><rect x="12" y="0" width="1" height="9" fill="#505050"/><rect x="14" y="0" width="1" height="11" fill="#505050"/><path d="M0 12.5 H16" stroke="#555" stroke-dasharray="1 1"/></svg>
<svg style="left:8px;top:478px" width="16" height="14" viewBox="0 0 16 14"><rect x="0" y="0" width="1" height="11" fill="#505050"/><rect x="2" y="0" width="2" height="9" fill="#505050"/><rect x="5" y="0" width="1" height="9" fill="#505050"/><rect x="7" y="0" width="1" height="11" fill="#505050"/><rect x="9" y="0" width="2" height="9" fill="#505050"/><rect x="12" y="0" width="1" height="9" fill="#505050"/><rect x="14" y="0" width="1" height="11" fill="#505050"/><path d="M0 12.5 H16" stroke="#555" stroke-dasharray="1 1"/></svg>
<svg style="left:7px;top:506px" width="18" height="18" viewBox="0 0 18 18"><rect x="0.5" y="3.5" width="6" height="6" fill="#C8C8C8" stroke="#777" stroke-width=".9"/><path d="M10.5 6.5 L16 15.5 H5 Z" fill="#FCE07A" stroke="#E0A020"/><circle cx="13" cy="3" r="2.7" fill="#8CD07A" stroke="#4AA83A" stroke-width=".9"/></svg>
<div class="a" style="left:30px;top:137px;width:175px;height:18px;background:#E3E3E3;"></div>
<div class="t" style="left:32px;top:139px;font-size:11.5px;letter-spacing:-0.17px;">Report Tree</div>
<div class="a" style="left:28px;top:155px;width:177px;height:224px;background:#fff;border:1px solid #828790"></div>
<div class="a" style="left:187px;top:156px;width:17px;height:222px;background:#F0F0F0;"></div>
<svg style="left:191px;top:162px" width="8" height="5" viewBox="0 0 8 5"><path d="M0.5 4.5 L4.0 0.8 L7.5 4.5" fill="none" stroke="#555" stroke-width="1.9"/></svg>
<div class="a" style="left:187px;top:173px;width:17px;height:167px;background:#CDCDCD;"></div>
<svg style="left:191px;top:367px" width="8" height="5" viewBox="0 0 8 5"><path d="M0.5 0.5 L4.0 4.2 L7.5 0.5" fill="none" stroke="#555" stroke-width="1.9"/></svg>
<div class="a" style="left:29px;top:156px;width:158px;height:222px;overflow:hidden"><div class="a" style="left:-29px;top:-156px">
<svg style="left:37px;top:163px" width="7" height="7" viewBox="0 0 7 7"><path d="M7 0 V7 H0 Z" fill="#111"/></svg>
<svg style="left:48px;top:158px" width="14" height="16" viewBox="0 0 14 16"><path d="M0.5 0.5 H9.5 L13.5 4.5 V15.5 H0.5 Z" fill="#fff" stroke="#6B7FA6"/><path d="M9.5 0.5 V4.5 H13.5" fill="none" stroke="#6B7FA6"/><rect x="3" y="4" width="4" height="4" fill="#4F9AD6"/><rect x="6.5" y="7.5" width="4.5" height="4.5" fill="#F1A020"/></svg>
<div class="t" style="left:68px;top:159px;font-size:11.5px;letter-spacing:0.1px;">Report</div>
<svg style="left:68px;top:177px" width="14" height="15" viewBox="0 0 14 15"><path d="M1 3 V12 A5.5 2.2 0 0 0 12 12 V3 Z" fill="url(#gy)" stroke="#C58A1A"/><ellipse cx="6.5" cy="3" rx="5.5" ry="2.2" fill="#FFEFA8" stroke="#C58A1A"/></svg>
<div class="t" style="left:88px;top:178px;font-size:11.5px;letter-spacing:-0.177px;">Data</div>
<div class="a" style="left:50px;top:195px;width:137px;height:19px;background:#D5E4F4;border:1px solid #86ACDC"></div>
<svg style="left:57px;top:201px" width="7" height="7" viewBox="0 0 7 7"><path d="M7 0 V7 H0 Z" fill="#111"/></svg>
<svg style="left:68px;top:195px" width="14" height="16" viewBox="0 0 14 16"><rect x="0.5" y="0.5" width="12" height="14.5" fill="url(#gpg)" stroke="#6B7592"/></svg>
<div class="t" style="left:88px;top:197px;font-size:11.5px;letter-spacing:-0.684px;">Page1</div>
<svg style="left:77px;top:220px" width="7" height="7" viewBox="0 0 7 7"><path d="M7 0 V7 H0 Z" fill="#111"/></svg>
<svg style="left:90px;top:219px" width="9" height="9" viewBox="0 0 9 9"><rect x="0" y="0" width="4" height="4" fill="#E8A020"/><rect x="5" y="0" width="4" height="4" fill="#F1B840"/><rect x="0" y="5" width="4" height="4" fill="#F1B840"/><rect x="5" y="5" width="4" height="4" fill="#E8A020"/></svg>
<div class="t" style="left:108px;top:216px;font-size:11.5px;letter-spacing:-0.559px;">Band2</div>
<svg style="left:109px;top:235px" width="13" height="14" viewBox="0 0 13 14"><text x="0" y="12" font-family="Liberation Serif,serif" font-weight="bold" font-size="16" fill="#CC5C5C">A</text></svg>
<div class="t" style="left:128px;top:235px;font-size:11.5px;letter-spacing:0.168px;">Memo2</div>
<svg style="left:106px;top:252px" width="17" height="17" viewBox="0 0 17 17"><rect x="0.5" y="0.5" width="12" height="14" fill="#fff" stroke="#5A5A5A"/><rect x="2" y="2" width="9" height="11" fill="url(#gpg)"/><rect x="7" y="8" width="8.5" height="7.5" fill="#FFF0A0" stroke="#A8963A" stroke-width=".9"/><path d="M8.5 10.3 H14 M8.5 12 H14 M8.5 13.7 H14" stroke="#C8AE40" stroke-width=".7"/></svg>
<div class="t" style="left:128px;top:254px;font-size:11.5px;letter-spacing:-0.012px;">Subreport1</div>
<svg style="left:106px;top:271px" width="17" height="17" viewBox="0 0 17 17"><rect x="0.5" y="0.5" width="12" height="14" fill="#fff" stroke="#5A5A5A"/><rect x="2" y="2" width="9" height="11" fill="url(#gpg)"/><rect x="7" y="8" width="8.5" height="7.5" fill="#FFF0A0" stroke="#A8963A" stroke-width=".9"/><path d="M8.5 10.3 H14 M8.5 12 H14 M8.5 13.7 H14" stroke="#C8AE40" stroke-width=".7"/></svg>
<div class="t" style="left:128px;top:273px;font-size:11.5px;letter-spacing:0.071px;">Subreport2</div>
<svg style="left:57px;top:296px" width="7" height="7" viewBox="0 0 7 7"><path d="M7 0 V7 H0 Z" fill="#111"/></svg>
<svg style="left:68px;top:290px" width="14" height="16" viewBox="0 0 14 16"><rect x="0.5" y="0.5" width="12" height="14.5" fill="url(#gpg)" stroke="#6B7592"/></svg>
<div class="t" style="left:88px;top:292px;font-size:11.5px;letter-spacing:-0.559px;">Page4</div>
<svg style="left:77px;top:315px" width="7" height="7" viewBox="0 0 7 7"><path d="M7 0 V7 H0 Z" fill="#111"/></svg>
<svg style="left:90px;top:314px" width="9" height="9" viewBox="0 0 9 9"><rect x="0" y="0" width="4" height="4" fill="#E8A020"/><rect x="5" y="0" width="4" height="4" fill="#F1B840"/><rect x="0" y="5" width="4" height="4" fill="#F1B840"/><rect x="5" y="5" width="4" height="4" fill="#E8A020"/></svg>
<div class="t" style="left:108px;top:311px;font-size:11.5px;letter-spacing:-0.08px;">MasterData1</div>
<svg style="left:109px;top:330px" width="13" height="14" viewBox="0 0 13 14"><text x="0" y="12" font-family="Liberation Serif,serif" font-weight="bold" font-size="16" fill="#CC5C5C">A</text></svg>
<div class="t" style="left:128px;top:330px;font-size:11.5px;letter-spacing:0.168px;">Memo4</div>
<svg style="left:57px;top:353px" width="7" height="7" viewBox="0 0 7 7"><path d="M7 0 V7 H0 Z" fill="#111"/></svg>
<svg style="left:68px;top:347px" width="14" height="16" viewBox="0 0 14 16"><rect x="0.5" y="0.5" width="12" height="14.5" fill="url(#gpg)" stroke="#6B7592"/></svg>
<div class="t" style="left:88px;top:349px;font-size:11.5px;letter-spacing:-0.559px;">Page5</div>
<svg style="left:77px;top:372px" width="7" height="7" viewBox="0 0 7 7"><path d="M7 0 V7 H0 Z" fill="#111"/></svg>
<svg style="left:90px;top:371px" width="9" height="9" viewBox="0 0 9 9"><rect x="0" y="0" width="4" height="4" fill="#E8A020"/><rect x="5" y="0" width="4" height="4" fill="#F1B840"/><rect x="0" y="5" width="4" height="4" fill="#F1B840"/><rect x="5" y="5" width="4" height="4" fill="#E8A020"/></svg>
<div class="t" style="left:108px;top:368px;font-size:11.5px;letter-spacing:-0.08px;">MasterData2</div>
</div></div>
<svg style="left:113px;top:378px" width="8" height="8" viewBox="0 0 8 8"><circle cx="3.5" cy="3.5" r="2" fill="#fff" stroke="#222"/></svg>
<svg style="left:204px;top:375px" width="8" height="8" viewBox="0 0 8 8"><circle cx="3.5" cy="3.5" r="2" fill="#fff" stroke="#222"/></svg>
<div class="a" style="left:30px;top:386px;width:175px;height:17px;background:#E3E3E3;"></div>
<div class="t" style="left:32px;top:387px;font-size:11.5px;letter-spacing:-0.045px;">Object Inspector</div>
<div class="a" style="left:28px;top:404px;width:177px;height:21px;background:#E8E8E8;border:1px solid #ACACAC"></div>
<div class="t" style="left:37px;top:407px;font-size:11.5px;letter-spacing:-0.377px;">Page1: TfrxReportPage</div>
<svg style="left:190px;top:412px" width="8" height="5" viewBox="0 0 8 5"><path d="M0.5 0.5 L4.0 4.2 L7.5 0.5" fill="none" stroke="#444" stroke-width="1.9"/></svg>
<div class="tab" style="left:101px;top:431px;width:53px;height:20px;font-size:11.5px;letter-spacing:-0.628px;padding-top:1px">Events</div>
<div class="a" style="left:28px;top:450px;width:177px;height:105px;background:#fff;border:1px solid #828790"></div>
<div class="tab" style="left:28px;top:429px;width:74px;height:23px;font-size:11.5px;letter-spacing:-0.043px;background:#fff;border-bottom:none;padding-top:3px;z-index:2">Properties</div>
<div class="a" style="left:29px;top:451px;width:158px;height:103px;background:#fff;"></div>
<div class="a" style="left:30px;top:452px;width:103px;height:18px;background:#D4D4D4;"></div>
<div class="a" style="left:29px;top:469px;width:158px;height:1px;background:#E0E0E0;"></div>
<div class="a" style="left:29px;top:487px;width:158px;height:1px;background:#E0E0E0;"></div>
<div class="a" style="left:29px;top:505px;width:158px;height:1px;background:#E0E0E0;"></div>
<div class="a" style="left:29px;top:523px;width:158px;height:1px;background:#E0E0E0;"></div>
<div class="a" style="left:29px;top:541px;width:158px;height:1px;background:#E0E0E0;"></div>
<div class="a" style="left:132px;top:452px;width:1px;height:90px;background:#D8D8D8;"></div>
<div class="t" style="left:45px;top:454px;width:87px;overflow:hidden;font-size:11.5px;letter-spacing:-0.434px">BackPicture</div>
<div class="t" style="left:45px;top:472px;width:87px;overflow:hidden;font-size:11.5px;letter-spacing:-0.196px">BackPicturePrintable</div>
<div class="t" style="left:45px;top:490px;width:87px;overflow:hidden;font-size:11.5px;letter-spacing:-0.237px">BackPictureVisible</div>
<div class="t" style="left:45px;top:508px;width:87px;overflow:hidden;font-size:11.5px;letter-spacing:0.178px">BottomMargin</div>
<div class="t" style="left:45px;top:526px;width:87px;overflow:hidden;font-size:11.5px;letter-spacing:0.129px">Color</div>
<svg style="left:32px;top:456px" width="9" height="9" viewBox="0 0 9 9"><rect x="0.5" y="0.5" width="8" height="8" fill="#F4F4F4" stroke="#A8A8A8"/><path d="M2 4.5 H7 M4.5 2 V7" stroke="#777"/></svg>
<div class="t" style="left:137px;top:454px;font-size:11.5px;letter-spacing:0.009px;color:#222">igned)</div>
<div class="a" style="left:172px;top:452px;width:14px;height:17px;background:#F0F0F0;border:1px solid #999"></div>
<div class="a" style="left:176px;top:461px;width:3px;height:3px;background:#444;"></div>
<svg style="left:135px;top:473px" width="13" height="13" viewBox="0 0 13 13"><rect x="0.5" y="0.5" width="12" height="12" fill="#fff" stroke="#333"/><path d="M3 6.5 L5.5 9 L10 3.5" fill="none" stroke="#111" stroke-width="1.6"/></svg>
<svg style="left:135px;top:491px" width="13" height="13" viewBox="0 0 13 13"><rect x="0.5" y="0.5" width="12" height="12" fill="#fff" stroke="#333"/><path d="M3 6.5 L5.5 9 L10 3.5" fill="none" stroke="#111" stroke-width="1.6"/></svg>
<div class="t" style="left:152px;top:472px;font-size:11.5px;letter-spacing:-0.573px;color:#1A1A8A">True</div>
<div class="t" style="left:152px;top:490px;font-size:11.5px;letter-spacing:-0.573px;color:#1A1A8A">True</div>
<div class="t" style="left:137px;top:508px;font-size:11.5px;letter-spacing:-0.62px;color:#1A1A8A">0.50</div>
<div class="a" style="left:135px;top:526px;width:13px;height:13px;background:#000;"></div>
<div class="t" style="left:152px;top:526px;font-size:11.5px;letter-spacing:0.224px;color:#1A1A8A">Null</div>
<div class="a" style="left:187px;top:451px;width:17px;height:103px;background:#F0F0F0;"></div>
<svg style="left:191px;top:457px" width="8" height="5" viewBox="0 0 8 5"><path d="M0.5 4.5 L4.0 0.8 L7.5 4.5" fill="none" stroke="#555" stroke-width="1.9"/></svg>
<div class="a" style="left:187px;top:468px;width:17px;height:15px;background:#CDCDCD;"></div>
<svg style="left:191px;top:543px" width="8" height="5" viewBox="0 0 8 5"><path d="M0.5 0.5 L4.0 4.2 L7.5 0.5" fill="none" stroke="#555" stroke-width="1.9"/></svg>
<svg style="left:113px;top:554px" width="6" height="6" viewBox="0 0 6 6"><circle cx="3" cy="3" r="1.4" fill="#fff" stroke="#222" stroke-width=".8"/></svg>
<div class="a" style="left:28px;top:558px;width:177px;height:65px;background:#F0F0F0;border:1px solid #8C8C8C"></div>
<div class="t" style="left:30px;top:559px;font-size:11.5px;letter-spacing:-0.434px;">BackPicture</div>
<div class="t" style="left:30px;top:575px;font-size:11.5px;letter-spacing:-0.019px;">The background page picture</div>
<div class="a" style="left:210px;top:138px;width:600px;height:485px;background:#F5F5F5;"></div>
<div class="a" style="left:264px;top:141px;width:544px;height:15px;background:#fff;"></div>
<div class="a" style="left:213px;top:192px;width:15px;height:430px;background:#fff;"></div>
<svg style="left:264px;top:141px" width="542" height="15" viewBox="0 0 542 15"><path d="M19.5 4 V9" stroke="#111" stroke-width="1"/><text x="38.3" y="9.5" text-anchor="middle" font-size="8.8" font-family="Liberation Sans,sans-serif" fill="#000" stroke="#000" stroke-width=".2">1</text><path d="M57.5 4 V9" stroke="#111" stroke-width="1"/><text x="76.1" y="9.5" text-anchor="middle" font-size="8.8" font-family="Liberation Sans,sans-serif" fill="#000" stroke="#000" stroke-width=".2">2</text><path d="M94.5 4 V9" stroke="#111" stroke-width="1"/><text x="113.9" y="9.5" text-anchor="middle" font-size="8.8" font-family="Liberation Sans,sans-serif" fill="#000" stroke="#000" stroke-width=".2">3</text><path d="M132.5 4 V9" stroke="#111" stroke-width="1"/><text x="151.7" y="9.5" text-anchor="middle" font-size="8.8" font-family="Liberation Sans,sans-serif" fill="#000" stroke="#000" stroke-width=".2">4</text><path d="M170.5 4 V9" stroke="#111" stroke-width="1"/><text x="189.5" y="9.5" text-anchor="middle" font-size="8.8" font-family="Liberation Sans,sans-serif" fill="#000" stroke="#000" stroke-width=".2">5</text><path d="M208.5 4 V9" stroke="#111" stroke-width="1"/><text x="227.3" y="9.5" text-anchor="middle" font-size="8.8" font-family="Liberation Sans,sans-serif" fill="#000" stroke="#000" stroke-width=".2">6</text><path d="M246.5 4 V9" stroke="#111" stroke-width="1"/><text x="265.1" y="9.5" text-anchor="middle" font-size="8.8" font-family="Liberation Sans,sans-serif" fill="#000" stroke="#000" stroke-width=".2">7</text><path d="M283.5 4 V9" stroke="#111" stroke-width="1"/><text x="302.9" y="9.5" text-anchor="middle" font-size="8.8" font-family="Liberation Sans,sans-serif" fill="#000" stroke="#000" stroke-width=".2">8</text><path d="M321.5 4 V9" stroke="#111" stroke-width="1"/><text x="340.7" y="9.5" text-anchor="middle" font-size="8.8" font-family="Liberation Sans,sans-serif" fill="#000" stroke="#000" stroke-width=".2">9</text><path d="M359.5 4 V9" stroke="#111" stroke-width="1"/><text x="378.5" y="9.5" text-anchor="middle" font-size="8.8" font-family="Liberation Sans,sans-serif" fill="#000" stroke="#000" stroke-width=".2">10</text><path d="M397.5 4 V9" stroke="#111" stroke-width="1"/><text x="416.3" y="9.5" text-anchor="middle" font-size="8.8" font-family="Liberation Sans,sans-serif" fill="#000" stroke="#000" stroke-width=".2">11</text><path d="M435.5 4 V9" stroke="#111" stroke-width="1"/><text x="454.1" y="9.5" text-anchor="middle" font-size="8.8" font-family="Liberation Sans,sans-serif" fill="#000" stroke="#000" stroke-width=".2">12</text><path d="M472.5 4 V9" stroke="#111" stroke-width="1"/><text x="491.9" y="9.5" text-anchor="middle" font-size="8.8" font-family="Liberation Sans,sans-serif" fill="#000" stroke="#000" stroke-width=".2">13</text><path d="M510.5 4 V9" stroke="#111" stroke-width="1"/><text x="529.7" y="9.5" text-anchor="middle" font-size="8.8" font-family="Liberation Sans,sans-serif" fill="#000" stroke="#000" stroke-width=".2">14</text><path d="M100.5 0 V15" stroke="#111" stroke-width="1.2"/></svg>
<svg style="left:213px;top:192px" width="15" height="414" viewBox="0 0 15 414"><path d="M4 19.5 H9" stroke="#111" stroke-width="1"/><text transform="translate(9.6 36.8) rotate(-90)" text-anchor="middle" font-size="8.8" font-family="Liberation Sans,sans-serif" fill="#000" stroke="#000" stroke-width=".25">1</text><path d="M4 57.5 H9" stroke="#111" stroke-width="1"/><text transform="translate(9.6 74.6) rotate(-90)" text-anchor="middle" font-size="8.8" font-family="Liberation Sans,sans-serif" fill="#000" stroke="#000" stroke-width=".25">2</text><path d="M4 94.5 H9" stroke="#111" stroke-width="1"/><text transform="translate(9.6 112.4) rotate(-90)" text-anchor="middle" font-size="8.8" font-family="Liberation Sans,sans-serif" fill="#000" stroke="#000" stroke-width=".25">3</text><path d="M4 132.5 H9" stroke="#111" stroke-width="1"/><text transform="translate(9.6 150.2) rotate(-90)" text-anchor="middle" font-size="8.8" font-family="Liberation Sans,sans-serif" fill="#000" stroke="#000" stroke-width=".25">4</text><path d="M4 170.5 H9" stroke="#111" stroke-width="1"/><text transform="translate(9.6 188.0) rotate(-90)" text-anchor="middle" font-size="8.8" font-family="Liberation Sans,sans-serif" fill="#000" stroke="#000" stroke-width=".25">5</text><path d="M4 208.5 H9" stroke="#111" stroke-width="1"/><text transform="translate(9.6 225.8) rotate(-90)" text-anchor="middle" font-size="8.8" font-family="Liberation Sans,sans-serif" fill="#000" stroke="#000" stroke-width=".25">6</text><path d="M4 246.5 H9" stroke="#111" stroke-width="1"/><text transform="translate(9.6 263.6) rotate(-90)" text-anchor="middle" font-size="8.8" font-family="Liberation Sans,sans-serif" fill="#000" stroke="#000" stroke-width=".25">7</text><path d="M4 283.5 H9" stroke="#111" stroke-width="1"/><text transform="translate(9.6 301.4) rotate(-90)" text-anchor="middle" font-size="8.8" font-family="Liberation Sans,sans-serif" fill="#000" stroke="#000" stroke-width=".25">8</text><path d="M4 321.5 H9" stroke="#111" stroke-width="1"/><text transform="translate(9.6 339.2) rotate(-90)" text-anchor="middle" font-size="8.8" font-family="Liberation Sans,sans-serif" fill="#000" stroke="#000" stroke-width=".25">9</text><path d="M4 359.5 H9" stroke="#111" stroke-width="1"/><text transform="translate(9.6 372.0) rotate(-90)" text-anchor="middle" font-size="8.8" font-family="Liberation Sans,sans-serif" fill="#000" stroke="#000" stroke-width=".25">10</text><path d="M4 397.5 H9" stroke="#111" stroke-width="1"/><text transform="translate(9.6 409.8) rotate(-90)" text-anchor="middle" font-size="8.8" font-family="Liberation Sans,sans-serif" fill="#000" stroke="#000" stroke-width=".25">11</text></svg>
<div class="a" style="left:233px;top:161px;width:559px;height:445px;background:#DFDFDF;"></div>
<div class="a" style="left:243px;top:171px;width:560px;height:440px;background:#fff;"></div>
<div class="a" style="left:244px;top:171px;width:560px;height:2px;background:#9A9A9A;"></div>
<div class="a" style="left:243px;top:171px;width:549px;height:435px;overflow:hidden"><svg style="left:0px;top:0px" width="560" height="440" viewBox="0 0 560 440"><path d="M38.5 19 V440" stroke="#E7E7E7"/><path d="M57.5 19 V440" stroke="#E7E7E7"/><path d="M76.5 19 V440" stroke="#E7E7E7"/><path d="M95.5 19 V440" stroke="#E7E7E7"/><path d="M113.5 19 V440" stroke="#E7E7E7"/><path d="M132.5 19 V440" stroke="#E7E7E7"/><path d="M151.5 19 V440" stroke="#E7E7E7"/><path d="M170.5 19 V440" stroke="#E7E7E7"/><path d="M189.5 19 V440" stroke="#E7E7E7"/><path d="M208.5 19 V440" stroke="#E7E7E7"/><path d="M227.5 19 V440" stroke="#E7E7E7"/><path d="M246.5 19 V440" stroke="#E7E7E7"/><path d="M265.5 19 V440" stroke="#E7E7E7"/><path d="M284.5 19 V440" stroke="#E7E7E7"/><path d="M302.5 19 V440" stroke="#E7E7E7"/><path d="M321.5 19 V440" stroke="#E7E7E7"/><path d="M340.5 19 V440" stroke="#E7E7E7"/><path d="M359.5 19 V440" stroke="#E7E7E7"/><path d="M378.5 19 V440" stroke="#E7E7E7"/><path d="M397.5 19 V440" stroke="#E7E7E7"/><path d="M416.5 19 V440" stroke="#E7E7E7"/><path d="M435.5 19 V440" stroke="#E7E7E7"/><path d="M454.5 19 V440" stroke="#E7E7E7"/><path d="M473.5 19 V440" stroke="#E7E7E7"/><path d="M491.5 19 V440" stroke="#E7E7E7"/><path d="M510.5 19 V440" stroke="#E7E7E7"/><path d="M529.5 19 V440" stroke="#E7E7E7"/><path d="M548.5 19 V440" stroke="#E7E7E7"/><path d="M19 38.5 H560" stroke="#E7E7E7"/><path d="M19 57.5 H560" stroke="#E7E7E7"/><path d="M19 76.5 H560" stroke="#E7E7E7"/><path d="M19 95.5 H560" stroke="#E7E7E7"/><path d="M19 113.5 H560" stroke="#E7E7E7"/><path d="M19 132.5 H560" stroke="#E7E7E7"/><path d="M19 151.5 H560" stroke="#E7E7E7"/><path d="M19 170.5 H560" stroke="#E7E7E7"/><path d="M19 189.5 H560" stroke="#E7E7E7"/><path d="M19 208.5 H560" stroke="#E7E7E7"/><path d="M19 227.5 H560" stroke="#E7E7E7"/><path d="M19 246.5 H560" stroke="#E7E7E7"/><path d="M19 265.5 H560" stroke="#E7E7E7"/><path d="M19 284.5 H560" stroke="#E7E7E7"/><path d="M19 302.5 H560" stroke="#E7E7E7"/><path d="M19 321.5 H560" stroke="#E7E7E7"/><path d="M19 340.5 H560" stroke="#E7E7E7"/><path d="M19 359.5 H560" stroke="#E7E7E7"/><path d="M19 378.5 H560" stroke="#E7E7E7"/><path d="M19 397.5 H560" stroke="#E7E7E7"/><path d="M19 416.5 H560" stroke="#E7E7E7"/><path d="M19 435.5 H560" stroke="#E7E7E7"/><path d="M19.5 19 V440" stroke="#BBB" stroke-dasharray="2 2"/><path d="M19 19.5 H560" stroke="#BBB" stroke-dasharray="2 2"/></svg></div>
<div class="a" style="left:262px;top:190px;width:530px;height:19px;background:#DFA62F;"></div>
<svg style="left:261px;top:189px" width="540" height="22" viewBox="0 0 540 22"><path d="M0.5 21 V0.5 H540" fill="none" stroke="#C8C8C8" stroke-dasharray="3 2"/></svg>
<div class="t" style="left:269px;top:192px;font-size:11px;line-height:14px;color:#222"><b>MasterData :</b> Band2</div>
<div class="a" style="left:262px;top:209px;width:496px;height:19px;background:#C0C0C0;"></div>
<div class="t" style="left:265px;top:210px;font-size:13.33px;line-height:16px;color:#222;letter-spacing:0.15px">[LINE]</div>
<svg style="left:262px;top:209px" width="6" height="20" viewBox="0 0 6 20"><path d="M4.5 0.5 H0.5 V5 M0.5 14 V18.5 H4.5" fill="none" stroke="#111"/></svg>
<svg style="left:752px;top:209px" width="6" height="20" viewBox="0 0 6 20"><path d="M1.5 0.5 H5.5 V5 M5.5 14 V18.5 H1.5" fill="none" stroke="#111"/></svg>
<div class="a" style="left:262px;top:232px;width:95px;height:19px;background:#C4C4C4;border:1px solid #111"></div>
<div class="a" style="left:357px;top:250px;width:60px;height:1px;background:#444;"></div>
<div class="a" style="left:792px;top:158px;width:17px;height:464px;background:#F0F0F0;"></div>
<svg style="left:796px;top:164px" width="8" height="5" viewBox="0 0 8 5"><path d="M0.5 4.5 L4.0 0.8 L7.5 4.5" fill="none" stroke="#555" stroke-width="1.9"/></svg>
<div class="a" style="left:792px;top:175px;width:17px;height:300px;background:#CDCDCD;"></div>
<div class="a" style="left:233px;top:606px;width:576px;height:16px;background:#F0F0F0;"></div>
<svg style="left:238px;top:610px" width="5" height="8" viewBox="0 0 5 8"><path d="M4.5 0.5 L0.8 4.0 L4.5 7.5" fill="none" stroke="#555" stroke-width="1.9"/></svg>
<div class="a" style="left:249px;top:606px;width:400px;height:16px;background:#CDCDCD;"></div>
<div class="tab" style="left:857px;top:138px;width:67px;height:20px;font-size:11.5px;letter-spacing:-0.16px;padding-top:1px">Variables</div>
<div class="a" style="left:813px;top:157px;width:145px;height:470px;background:#fff;border:1px solid #ACACAC"></div>
<div class="tab" style="left:813px;top:136px;width:45px;height:23px;font-size:11.5px;letter-spacing:-0.094px;background:#fff;border-bottom:none;padding-top:3px;z-index:2">Data</div>
<div class="a" style="left:815px;top:158px;width:143px;height:18px;background:#E3E3E3;"></div>
<div class="t" style="left:817px;top:160px;font-size:11.5px;letter-spacing:-0.311px;">Data Tree</div>
<div class="t" style="left:825px;top:178px;font-size:11.5px;letter-spacing:-0.114px;">No data available</div>
<div class="t" style="left:825px;top:207px;font-size:11.5px;letter-spacing:0.094px;">Go to the</div>
<div class="t" style="left:825px;top:222px;font-size:11.5px;letter-spacing:-0.156px;">"Report|Data..." menu to</div>
<svg style="left:64px;top:78px" width="50" height="37" viewBox="0 0 50 37"><path d="M0.5 12.5 H13.5 L24.5 1.5 L35.5 12.5 H49.5 V36.5 H0.5 Z" fill="#F6F6DE" stroke="#C4C4B0" stroke-width="1"/></svg>
<div class="t" style="left:70px;top:95px;font-size:11.5px;letter-spacing:-0.401px;color:#333">Preview</div>
</div></div>
<div id="prev"><div class="in">
<div class="a" style="left:399px;top:230px;width:624px;height:30px;background:#fff;"></div>
<svg style="left:407px;top:237px" width="15" height="13" viewBox="0 0 15 13"><rect x="0.5" y="0.5" width="14" height="12" fill="#F4F4F4" stroke="#AEB6BE"/><rect x="1.5" y="2" width="5.5" height="9" fill="url(#gapp)"/><rect x="7" y="2" width="4" height="9" fill="#E4E4E4"/><rect x="11.5" y="2" width="2" height="4" fill="#7CB8A0"/></svg>
<div class="t" style="left:428px;top:238px;font-size:12px;letter-spacing:-0.281px;">Preview</div>
<svg style="left:904px;top:238px" width="110" height="14" viewBox="0 0 110 14"><path d="M0 6.5 H10" stroke="#111" stroke-width="1.2"/><rect x="45.5" y="1.5" width="9" height="9" fill="none" stroke="#111" stroke-width="1.2"/><path d="M91 1 L101 11 M101 1 L91 11" stroke="#111" stroke-width="1.2"/></svg>
<div class="a" style="left:399px;top:260px;width:624px;height:31px;background:#EEF5FD;"></div>
<svg style="left:408px;top:266px" width="16" height="16" viewBox="0 0 16 16"><path d="M3.5 7 V1.5 H9.5 L12.5 4.5 V7" fill="#D6E6FA" stroke="#5B8DD6"/><rect x="0.5" y="6.5" width="15" height="9" rx="2.5" fill="url(#gprn)" stroke="#5A5A5A"/><rect x="3.5" y="12.5" width="9" height="4" fill="#F4F8FF" stroke="#5B8DD6"/></svg>
<svg style="left:434px;top:266px" width="16" height="16" viewBox="0 0 16 16"><path d="M0.5 6 V4.9 H5.5 L6.5 6 H13.5 V15.5 H0.5 Z" fill="url(#gfold)" stroke="#C87A18"/><path d="M1.5 9.5 H5.5 L6.5 8.5 H12.5" fill="none" stroke="#FFE9A8" stroke-width="1"/><path d="M8.5 4 C9.5 1 13.5 1 14.6 3.3" fill="none" stroke="#34558F" stroke-width="1"/><path d="M16 2 L15.4 5.6 L12.6 4 Z" fill="#34558F"/></svg>
<svg style="left:460px;top:266px" width="16" height="16" viewBox="0 0 16 16"><g opacity="1"><path d="M0.5 1.5 H14 L15.5 3 V16.5 H0.5 Z" fill="url(#gbl)" stroke="#3A68BC"/><rect x="3" y="2" width="9.5" height="5.5" fill="#E9EEF8"/><rect x="9.3" y="3" width="1.8" height="3.5" fill="#3E6FC4"/><rect x="3.5" y="10.5" width="9" height="5.5" fill="#F2F7EC"/><path d="M4.5 12.3 H11.5 M4.5 14.4 H11.5" stroke="#7DB84E" stroke-width="1.3"/></g></svg>
<svg style="left:487px;top:266px" width="16" height="16" viewBox="0 0 16 16"><rect x="0.5" y="2.5" width="14.5" height="12.5" rx="1" fill="#fff" stroke="#5B8DD6"/><rect x="0.5" y="2.5" width="14.5" height="2.5" fill="#8FB4EC"/><path d="M6.5 10.5 H10.5 V8 L15.5 12.5 L10.5 17 V14.5 H6.5 Z" fill="#6DB33F" stroke="#3F8A1C" stroke-width=".8"/></svg>
<div class="sep" style="left:510px;top:267px;width:1px;height:16px;"></div>
<div class="cb" style="left:515px;top:264px;width:69px;height:22px;"></div>
<div class="t" style="left:521px;top:268px;font-size:11.5px;letter-spacing:-0.797px;">100%</div>
<svg style="left:568px;top:272.5px" width="8" height="5" viewBox="0 0 8 5"><path d="M0.5 0.5 L4.0 4.2 L7.5 0.5" fill="none" stroke="#484848" stroke-width="1.9"/></svg>
<svg style="left:595px;top:266px" width="16" height="16" viewBox="0 0 16 16"><rect x="1.5" y="2.5" width="13" height="11" fill="#F4F7FC" stroke="#8A9AB8"/><path d="M3.5 4.8 H12.5 M3.5 7 H12.5 M3.5 9.2 H12.5 M3.5 11.4 H12.5" stroke="#333" stroke-width=".9"/><path d="M-0.5 8 L4 4.8 V11.2 Z M16.5 8 L12 4.8 V11.2 Z" fill="#2E6AD0"/></svg>
<svg style="left:621px;top:266px" width="16" height="16" viewBox="0 0 16 16"><rect x="0.5" y="2.5" width="15" height="12" rx="1.5" fill="url(#gsl)" stroke="#8A98B8"/><rect x="5.5" y="4.5" width="5.5" height="8" fill="#fff" stroke="#778"/><path d="M7 6.5 H9.5 M7 8.5 H9.5 M7 10.5 H9.5" stroke="#7A8AB0" stroke-width=".9"/></svg>
<svg style="left:647px;top:266px" width="16" height="16" viewBox="0 0 16 16"><rect x="0.5" y="2.5" width="15" height="12" rx="1.5" fill="url(#gsl)" stroke="#8A98B8"/><rect x="2.5" y="4.5" width="11" height="8" fill="#4F86E8" stroke="#3A66C0" stroke-width=".8"/><path d="M4 6.5 H12 M4 8.5 H12 M4 10.5 H12" stroke="#DCE9FF" stroke-width=".9"/></svg>
<div class="sep" style="left:671px;top:267px;width:1px;height:16px;"></div>
<svg style="left:680px;top:267px" width="16" height="16" viewBox="0 0 16 16"><rect x="1.5" y="2.5" width="14" height="12" fill="#fff" stroke="#7FA3DC"/><rect x="1.5" y="2.5" width="14" height="2.5" fill="#9EBFEE"/><path d="M7.5 5 V14.5" stroke="#7FA3DC"/><path d="M4 6.5 V12.5 M4 8 H6 M4 10 H6 M4 12 H6" stroke="#667" stroke-width=".8" stroke-dasharray="1 1"/></svg>
<svg style="left:707px;top:267px" width="16" height="16" viewBox="0 0 16 16"><rect x="2" y="2.5" width="12" height="10.5" fill="#F4F6FA"/><g fill="#1E2A5A"><rect x="2.5" y="3" width="2" height="2"/><rect x="2.5" y="5.7" width="2" height="2"/><rect x="2.5" y="8.4" width="2" height="2"/><rect x="2.5" y="11.1" width="2" height="2"/></g><path d="M6 4 H14 M6 6.7 H14 M6 9.4 H14 M6 12.1 H14" stroke="#222" stroke-width="1.1"/></svg>
<svg style="left:733px;top:267px" width="16" height="16" viewBox="0 0 16 16"><rect x="1.5" y="1.5" width="12" height="14" fill="#F4F4F4" stroke="#667"/><rect x="3.5" y="3.5" width="8" height="10" fill="#D6E6FA" stroke="#8FB0E0" stroke-width=".8"/><path d="M7.5 5.5 C5 6 5.5 9.5 6 10.5 H9 C9.5 9.5 10 6 7.5 5.5 Z" fill="#5FAE3A"/><rect x="6.5" y="10" width="2" height="1.6" fill="#3A5A2A"/></svg>
<svg style="left:759px;top:267px" width="16" height="16" viewBox="0 0 16 16"><rect x="1.5" y="5.5" width="10" height="10" fill="#FAFAFA" stroke="#778"/><path d="M4.5 13.5 L5.5 10 L12.5 2.5 L15 5 L8 12.5 Z" fill="#F1A93A" stroke="#C07A12" stroke-width=".8"/><path d="M4.5 13.5 L5.5 10 L8 12.5 Z" fill="#F8E0B0"/><path d="M12 3 L13.7 1.2 L16.2 3.7 L14.5 5.5 Z" fill="#F0A0A0" stroke="#C07070" stroke-width=".5"/></svg>
<div class="sep" style="left:783px;top:267px;width:1px;height:16px;"></div>
<svg style="left:793px;top:267px" width="16" height="16" viewBox="0 0 16 16"><path d="M4 1.8 V14.2" stroke="#2E5AAC" stroke-width="2.2"/><path d="M13 2 L5.5 8 L13 14 Z" fill="url(#gbl3)" stroke="#2E5AAC" stroke-width=".7"/></svg>
<svg style="left:819px;top:267px" width="16" height="16" viewBox="0 0 16 16"><path d="M11.3 2 L4 8 L11.3 14 Z" fill="url(#gbl3)" stroke="#2E5AAC" stroke-width=".7"/></svg>
<div class="cb" style="left:842px;top:264px;width:49px;height:22px;"></div>
<div class="t" style="left:846px;top:268px;">2</div>
<svg style="left:897px;top:267px" width="16" height="16" viewBox="0 0 16 16"><path d="M5 2 L12 8 L5 14 Z" fill="url(#gbl2)" stroke="#2E5AAC" stroke-width=".7"/></svg>
<svg style="left:922px;top:267px" width="16" height="16" viewBox="0 0 16 16"><path d="M13 1.8 V14.2" stroke="#2E5AAC" stroke-width="2.2"/><path d="M3.6 2 L11.5 8 L3.6 14 Z" fill="url(#gbl2)" stroke="#2E5AAC" stroke-width=".7"/></svg>
<div class="t" style="left:986px;top:268px;font-size:11.5px;letter-spacing:-0.227px;">Close</div>
<div class="a" style="left:399px;top:291px;width:624px;height:480px;overflow:hidden"><div class="a" style="left:-399px;top:-291px;width:1024px;height:800px">
<div class="a" style="left:399px;top:291px;width:11px;height:480px;background:#808080;"></div>
<div class="a" style="left:409px;top:291px;width:1px;height:480px;background:#000;"></div>
<div class="a" style="left:410px;top:291px;width:597px;height:480px;background:#fff;"></div>
<div class="a" style="left:428px;top:111px;width:495px;height:18px;background:#C0C0C0;"></div>
<div class="t" style="left:431px;top:111px;font-size:13.33px;line-height:16px;color:#111">8</div>
<div class="a" style="left:428px;top:133px;width:246px;height:19px;background:#FFE4CA;"></div>
<div class="t" style="left:431px;top:133px;font-size:13.33px;line-height:16px;color:#111">1</div>
<div class="a" style="left:428px;top:155px;width:246px;height:19px;background:#FFE4CA;"></div>
<div class="t" style="left:431px;top:155px;font-size:13.33px;line-height:16px;color:#111">2</div>
<div class="a" style="left:428px;top:178px;width:246px;height:19px;background:#FFE4CA;"></div>
<div class="t" style="left:431px;top:178px;font-size:13.33px;line-height:16px;color:#111">3</div>
<div class="a" style="left:428px;top:201px;width:246px;height:19px;background:#FFE4CA;"></div>
<div class="t" style="left:431px;top:201px;font-size:13.33px;line-height:16px;color:#111">4</div>
<div class="a" style="left:428px;top:223px;width:246px;height:19px;background:#FFE4CA;"></div>
<div class="t" style="left:431px;top:223px;font-size:13.33px;line-height:16px;color:#111">5</div>
<div class="a" style="left:428px;top:246px;width:246px;height:19px;background:#FFE4CA;"></div>
<div class="t" style="left:431px;top:246px;font-size:13.33px;line-height:16px;color:#111">6</div>
<div class="a" style="left:677px;top:133px;width:246px;height:38px;background:#CCFFCC;"></div>
<div class="t" style="left:680.5px;top:133px;font-size:13.33px;line-height:16px;color:#111">1</div>
<div class="a" style="left:677px;top:174px;width:246px;height:38px;background:#CCFFCC;"></div>
<div class="t" style="left:680.5px;top:174px;font-size:13.33px;line-height:16px;color:#111">2</div>
<div class="a" style="left:677px;top:216px;width:246px;height:38px;background:#CCFFCC;"></div>
<div class="t" style="left:680.5px;top:216px;font-size:13.33px;line-height:16px;color:#111">3</div>
<div class="a" style="left:677px;top:257px;width:246px;height:38px;background:#CCFFCC;"></div>
<div class="t" style="left:680.5px;top:257px;font-size:13.33px;line-height:16px;color:#111">4</div>
<div class="a" style="left:428px;top:300px;width:495px;height:18px;background:#C0C0C0;"></div>
<div class="t" style="left:431px;top:300px;font-size:13.33px;line-height:16px;color:#111">9</div>
<div class="a" style="left:428px;top:322px;width:246px;height:19px;background:#FFE4CA;"></div>
<div class="t" style="left:431px;top:322px;font-size:13.33px;line-height:16px;color:#111">1</div>
<div class="a" style="left:428px;top:344px;width:246px;height:19px;background:#FFE4CA;"></div>
<div class="t" style="left:431px;top:344px;font-size:13.33px;line-height:16px;color:#111">2</div>
<div class="a" style="left:428px;top:367px;width:246px;height:19px;background:#FFE4CA;"></div>
<div class="t" style="left:431px;top:367px;font-size:13.33px;line-height:16px;color:#111">3</div>
<div class="a" style="left:428px;top:390px;width:246px;height:19px;background:#FFE4CA;"></div>
<div class="t" style="left:431px;top:390px;font-size:13.33px;line-height:16px;color:#111">4</div>
<div class="a" style="left:428px;top:412px;width:246px;height:19px;background:#FFE4CA;"></div>
<div class="t" style="left:431px;top:412px;font-size:13.33px;line-height:16px;color:#111">5</div>
<div class="a" style="left:428px;top:435px;width:246px;height:19px;background:#FFE4CA;"></div>
<div class="t" style="left:431px;top:435px;font-size:13.33px;line-height:16px;color:#111">6</div>
<div class="a" style="left:677px;top:322px;width:246px;height:37px;background:#CCFFCC;"></div>
<div class="t" style="left:680.5px;top:322px;font-size:13.33px;line-height:16px;color:#111">1</div>
<div class="a" style="left:677px;top:363px;width:246px;height:38px;background:#CCFFCC;"></div>
<div class="t" style="left:680.5px;top:363px;font-size:13.33px;line-height:16px;color:#111">2</div>
<div class="a" style="left:677px;top:405px;width:246px;height:38px;background:#CCFFCC;"></div>
<div class="t" style="left:680.5px;top:405px;font-size:13.33px;line-height:16px;color:#111">3</div>
<div class="a" style="left:677px;top:446px;width:246px;height:38px;background:#CCFFCC;"></div>
<div class="t" style="left:680.5px;top:446px;font-size:13.33px;line-height:16px;color:#111">4</div>
<div class="a" style="left:428px;top:488px;width:495px;height:19px;background:#C0C0C0;"></div>
<div class="t" style="left:431px;top:488px;font-size:13.33px;line-height:16px;color:#111">10</div>
<div class="a" style="left:428px;top:511px;width:246px;height:19px;background:#FFE4CA;"></div>
<div class="t" style="left:431px;top:511px;font-size:13.33px;line-height:16px;color:#111">1</div>
<div class="a" style="left:428px;top:533px;width:246px;height:19px;background:#FFE4CA;"></div>
<div class="t" style="left:431px;top:533px;font-size:13.33px;line-height:16px;color:#111">2</div>
<div class="a" style="left:428px;top:556px;width:246px;height:19px;background:#FFE4CA;"></div>
<div class="t" style="left:431px;top:556px;font-size:13.33px;line-height:16px;color:#111">3</div>
<div class="a" style="left:428px;top:579px;width:246px;height:19px;background:#FFE4CA;"></div>
<div class="t" style="left:431px;top:579px;font-size:13.33px;line-height:16px;color:#111">4</div>
<div class="a" style="left:428px;top:601px;width:246px;height:19px;background:#FFE4CA;"></div>
<div class="t" style="left:431px;top:601px;font-size:13.33px;line-height:16px;color:#111">5</div>
<div class="a" style="left:428px;top:624px;width:246px;height:19px;background:#FFE4CA;"></div>
<div class="t" style="left:431px;top:624px;font-size:13.33px;line-height:16px;color:#111">6</div>
<div class="a" style="left:677px;top:511px;width:246px;height:37px;background:#CCFFCC;"></div>
<div class="t" style="left:680.5px;top:511px;font-size:13.33px;line-height:16px;color:#111">1</div>
<div class="a" style="left:677px;top:552px;width:246px;height:38px;background:#CCFFCC;"></div>
<div class="t" style="left:680.5px;top:552px;font-size:13.33px;line-height:16px;color:#111">2</div>
<div class="a" style="left:677px;top:594px;width:246px;height:38px;background:#CCFFCC;"></div>
<div class="t" style="left:680.5px;top:594px;font-size:13.33px;line-height:16px;color:#111">3</div>
<div class="a" style="left:677px;top:635px;width:246px;height:38px;background:#CCFFCC;"></div>
<div class="t" style="left:680.5px;top:635px;font-size:13.33px;line-height:16px;color:#111">4</div>
<div class="a" style="left:428px;top:677px;width:495px;height:19px;background:#C0C0C0;"></div>
<div class="t" style="left:431px;top:677px;font-size:13.33px;line-height:16px;color:#111">11</div>
<div class="a" style="left:428px;top:700px;width:246px;height:19px;background:#FFE4CA;"></div>
<div class="t" style="left:431px;top:700px;font-size:13.33px;line-height:16px;color:#111">1</div>
<div class="a" style="left:428px;top:722px;width:246px;height:19px;background:#FFE4CA;"></div>
<div class="t" style="left:431px;top:722px;font-size:13.33px;line-height:16px;color:#111">2</div>
<div class="a" style="left:428px;top:745px;width:246px;height:19px;background:#FFE4CA;"></div>
<div class="t" style="left:431px;top:745px;font-size:13.33px;line-height:16px;color:#111">3</div>
<div class="a" style="left:428px;top:768px;width:246px;height:19px;background:#FFE4CA;"></div>
<div class="t" style="left:431px;top:768px;font-size:13.33px;line-height:16px;color:#111">4</div>
<div class="a" style="left:428px;top:790px;width:246px;height:19px;background:#FFE4CA;"></div>
<div class="t" style="left:431px;top:790px;font-size:13.33px;line-height:16px;color:#111">5</div>
<div class="a" style="left:428px;top:813px;width:246px;height:19px;background:#FFE4CA;"></div>
<div class="t" style="left:431px;top:813px;font-size:13.33px;line-height:16px;color:#111">6</div>
<div class="a" style="left:677px;top:700px;width:246px;height:37px;background:#CCFFCC;"></div>
<div class="t" style="left:680.5px;top:700px;font-size:13.33px;line-height:16px;color:#111">1</div>
<div class="a" style="left:677px;top:741px;width:246px;height:38px;background:#CCFFCC;"></div>
<div class="t" style="left:680.5px;top:741px;font-size:13.33px;line-height:16px;color:#111">2</div>
<div class="a" style="left:677px;top:783px;width:246px;height:38px;background:#CCFFCC;"></div>
<div class="t" style="left:680.5px;top:783px;font-size:13.33px;line-height:16px;color:#111">3</div>
<div class="a" style="left:677px;top:824px;width:246px;height:38px;background:#CCFFCC;"></div>
<div class="t" style="left:680.5px;top:824px;font-size:13.33px;line-height:16px;color:#111">4</div>
<div class="a" style="left:1007px;top:291px;width:16px;height:480px;background:#F0F0F0;"></div>
<svg style="left:1011px;top:296px" width="8" height="5" viewBox="0 0 8 5"><path d="M0.5 4.5 L4.0 0.8 L7.5 4.5" fill="none" stroke="#555" stroke-width="1.9"/></svg>
<div class="a" style="left:1007px;top:478px;width:16px;height:55px;background:#CDCDCD;"></div>
</div></div>
</div></div>
</body></html>
